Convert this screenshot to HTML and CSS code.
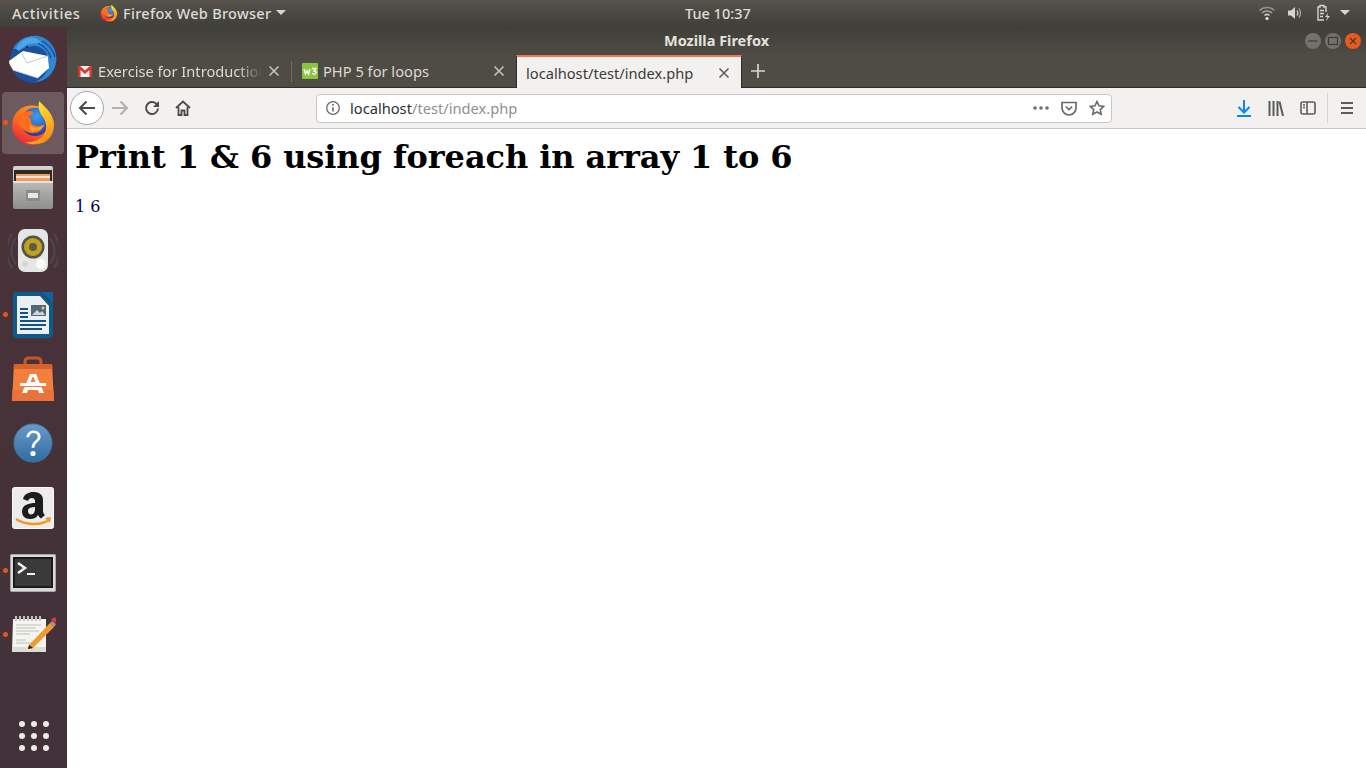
FILE: index.html
```html
<!DOCTYPE html>
<html lang="en">
<head>
  <meta charset="UTF-8">
  <title>Mozilla Firefox</title>
  <link rel="stylesheet" href="styles.css">
</head>
<body>
  <svg class="defs" width="0" height="0">
    <defs>
      <linearGradient id="ffOuter" x1="0.7" y1="0" x2="0.2" y2="1">
        <stop offset="0" stop-color="#ff9a24"/>
        <stop offset="0.5" stop-color="#ff6a1e"/>
        <stop offset="1" stop-color="#e8203c"/>
      </linearGradient>
      <radialGradient id="ffBlue" cx="0.55" cy="0.3" r="0.75">
        <stop offset="0" stop-color="#3aa0f0"/>
        <stop offset="1" stop-color="#2b2f9c"/>
      </radialGradient>
      <linearGradient id="ffYellow" x1="0" y1="0" x2="0.6" y2="1">
        <stop offset="0" stop-color="#fff24e"/>
        <stop offset="0.6" stop-color="#ffc020"/>
        <stop offset="1" stop-color="#ff8a1e"/>
      </linearGradient>
      <symbol id="firefox" viewBox="0 0 44 44">
        <circle cx="21" cy="24" r="19" fill="url(#ffOuter)"/>
        <circle cx="24" cy="21" r="13.500" fill="url(#ffBlue)"/>
        <path d="M28 1c3 4 12 10 14 20 1 10-4 17-10 20-6 2-13 2-18-1 7 1 14-1 18-6 4-6 3-12 0-17-3-4-6-9-4-16z" fill="url(#ffYellow)"/>
        <path d="M8 16c3-4 8-6 14-5 1 2-2 4-5 4.500 2 1 4 3 3 6 3 4 8 4.500 13 1.500-2 7-8 10-15 8-7-2-11-9-10-15z" fill="#ff6d1e"/>
        <path d="M19 24c4 3 9 3 14 0-3 5-9 8-14 5z" fill="#ff9e22"/>
      </symbol>
    </defs>
  </svg>

  <header class="topbar">
    <span class="topbar-item activities">Activities</span>
    <span class="topbar-item app-menu">
      <svg class="app-menu-icon"><use href="#firefox"/></svg>
      Firefox Web Browser
      <i class="caret"></i>
    </span>
    <span class="clock">Tue 10:37</span>
    <span class="tray">
      <svg width="18" height="16" viewBox="0 0 18 16" fill="none" stroke="#c9c7c1" stroke-width="1.500">
        <path d="M1.500 5.500c4-4 11-4 15 0" opacity=".55"/>
        <path d="M4 8c2.700-2.700 7.300-2.700 10 0" opacity=".7"/>
        <path d="M6.500 10.500c1.400-1.300 3.600-1.300 5 0"/>
        <circle cx="9" cy="13.500" r="1.600" fill="#e8e6e0" stroke="none"/>
      </svg>
      <svg width="16" height="16" viewBox="0 0 16 16" fill="none" stroke="#d6d4ce" stroke-width="1.200">
        <path d="M1 5.500h3L8 2v12L4 10.500H1z" fill="#d6d4ce" stroke="none"/>
        <path d="M10 5.500c1 1.500 1 3.500 0 5"/>
        <path d="M12 3.500c2 3 2 6 0 9" opacity=".7"/>
      </svg>
      <svg class="tray-power" width="16" height="18" viewBox="0 0 16 18" fill="none" stroke="#d6d4ce" stroke-width="1.400">
        <path d="M8 16H2V3h2V1.500h4V3h2v5"/>
        <path d="M4 6.500h4M4 9.500h4M4 12.500h3"/>
        <path d="M12 9l-3 4h2.500L10 17l4-5h-2.500z" fill="#d6d4ce" stroke="none"/>
      </svg>
      <i class="caret"></i>
    </span>
  </header>

  <div class="desktop">
    <nav class="dock">
      <div class="dock-item">
        <svg width="50" height="50" viewBox="0 0 50 50">
          <circle cx="25" cy="26" r="23" fill="#1c4f9c"/>
          <path d="M5 15C10 4 23-1 34 3c10 4 16 15 14 26-2 10-10 18-20 19 7-4 13-11 13-20 0-9-7-16-15-16-7 0-13 4-17 3z" fill="#2f86d2"/>
          <path d="M8 15C12 6 20 2 27 4c3 1 6 3 7 7-5-2-12-2-17 1l-6 5z" fill="#4aa8e8"/>
          <path d="M30 9c6 3 11 8 13 15M34 7c6 3 11 9 13 16M38 30c-1 5-4 10-8 13" fill="none" stroke="#164894" stroke-width="1.200"/>
          <path d="M1 27l14-10 25 5 1 12-11 10-25-8c-2-3-4-6-4-9z" fill="#fff"/>
          <path d="M13 18l6 11 21-7" fill="none" stroke="#c4ccd6" stroke-width="1"/>
          <path d="M5 36l25 8" stroke="#cfd6de" stroke-width="1"/>
          <circle cx="19" cy="13" r="1.200" fill="#12305c"/>
        </svg>
      </div>
      <div class="dock-item is-active">
        <i class="dot"></i>
        <svg width="46" height="46"><use href="#firefox"/></svg>
      </div>
      <div class="dock-item">
        <svg width="44" height="46" viewBox="0 0 44 46">
          <defs>
            <linearGradient id="cab" x1="0" y1="0" x2="0" y2="1"><stop offset="0" stop-color="#d4d4d0"/><stop offset="1" stop-color="#8e8e8a"/></linearGradient>
          </defs>
          <path d="M2 4q0-2 2-2h36q2 0 2 2v39q0 2-2 2H4q-2 0-2-2z" fill="url(#cab)"/>
          <rect x="3" y="6" width="38" height="13" fill="#2e2a28"/>
          <rect x="5" y="10" width="34" height="8" fill="#ee9c62"/>
          <rect x="5" y="12" width="34" height="2" fill="#fbe6d2"/>
          <rect x="2" y="17" width="40" height="2" fill="#e4e4e0"/>
          <rect x="15" y="26" width="14" height="11" rx="1" fill="#8b8b87"/>
          <rect x="17" y="29" width="10" height="5" fill="#e8e8e4"/>
        </svg>
      </div>
      <div class="dock-item">
        <svg width="50" height="46" viewBox="0 0 50 46">
          <g fill="none" stroke="#5a7fa8" stroke-width="2" opacity=".25">
            <path d="M8 10c-6 8-6 18 0 26"/><path d="M42 10c6 8 6 18 0 26"/>
            <path d="M4 6c-7 10-7 24 0 34"/><path d="M46 6c7 10 7 24 0 34"/>
          </g>
          <rect x="10" y="1" width="30" height="43" rx="7" fill="#e4e7e3"/>
          <circle cx="25" cy="19" r="11.500" fill="#55524a"/>
          <circle cx="25" cy="19" r="9" fill="#bfa21e"/>
          <circle cx="25" cy="19" r="4" fill="#5f5a4a"/>
          <circle cx="33" cy="36" r="5" fill="#fafafa"/>
          <circle cx="17" cy="36" r="3" fill="#d4d6d2"/>
        </svg>
      </div>
      <div class="dock-item">
        <i class="dot"></i>
        <svg width="42" height="48" viewBox="0 0 42 48">
          <path d="M1 4q0-3 3-3h24l13 13v29q0 4-4 4H5q-4 0-4-4z" fill="#0f5a8c"/>
          <path d="M29 1l12 12V1z" fill="#0f639c"/>
          <path d="M5 5h23l9 10v28H5z" fill="#eceef0"/>
          <path d="M8 17h8v2H8zM8 21h8v2H8zM8 25h8v2H8zM8 29h26v2H8zM8 33h26v2H8zM8 37h22v2H8z" fill="#12527e"/>
          <rect x="19" y="14" width="15" height="11" fill="#54677a"/>
          <path d="M20 24l5-5 3 3 2-2 3 4z" fill="#cfd8e0"/>
          <circle cx="31" cy="17" r="1.500" fill="#f0d040"/>
        </svg>
      </div>
      <div class="dock-item">
        <svg width="44" height="46" viewBox="0 0 44 46">
          <path d="M14 12V6q0-4 4-4h8q4 0 4 4v6" fill="none" stroke="#c4562a" stroke-width="3"/>
          <path d="M3 8h38l2 37H1z" fill="#f27f3e"/>
          <path d="M3 8h38l.5 5H2.500z" fill="#d9622b"/>
          <path d="M1.500 34h41l.5 11H1z" fill="#e9733a"/>
          <path d="M19 18h6l8 19h-5l-1-3H17l-1 3h-5z" fill="#fff"/>
          <path d="M9 27h26v3H9z" fill="#fff"/>
          <path d="M21.500 21h1l2 5h-5z" fill="#f27f3e"/>
          <path d="M9 30h26v1H9z" fill="#f27f3e"/>
        </svg>
      </div>
      <div class="dock-item">
        <svg width="40" height="40" viewBox="0 0 42 42">
          <defs>
            <linearGradient id="helpBlue" x1="0" y1="0" x2="0" y2="1"><stop offset="0" stop-color="#6a9ac6"/><stop offset="1" stop-color="#2e6da4"/></linearGradient>
          </defs>
          <circle cx="21" cy="21" r="20" fill="url(#helpBlue)" stroke="#3f78ab"/>
          <path d="M14 15c.5-4 3.500-7 7.500-7 4.500 0 7.500 3 7.500 6.500 0 5-6 5.500-6.500 11.500h-3c0-6.500 6.500-7.500 6.500-11.500 0-2.500-2-4-4.500-4s-4 1.500-4.500 4.500z" fill="#fff"/>
          <circle cx="21" cy="32" r="2.700" fill="#fff"/>
        </svg>
      </div>
      <div class="dock-item dock-item-low">
        <svg width="42" height="42" viewBox="0 0 42 42">
          <rect x="0.500" y="0.500" width="41" height="41" rx="2" fill="#ececec" stroke="#f8f8f8"/>
          <path d="M11 12c1-5 6-7 10-7 6 0 10 2.500 10 8v11c0 2 1 3 2 4l-4 3.500c-1.500-1-2.500-2.500-3-3.500-2 3-4.500 4-8 4-5 0-8-3-8-7.500 0-6 6-8.500 13-8.500v-2c0-2-1.500-3-3-3-2 0-3.500 1-4 3zm12 8c-4 0-7 1-7 4 0 2 1 3.500 3 3.500 3 0 4-3 4-5.500z" fill="#1d1d1d"/>
          <path d="M4 32c9 6 24 7 33 1" fill="none" stroke="#f29a1e" stroke-width="2.500"/>
          <path d="M33 31l6-1-1 6z" fill="#f29a1e"/>
        </svg>
      </div>
      <div class="dock-item dock-item-lower">
        <i class="dot"></i>
        <svg width="46" height="38" viewBox="0 0 46 38">
          <rect x="0.500" y="0.500" width="45" height="37" rx="1" fill="#d8d8d8" stroke="#a8a8a8"/>
          <rect x="3" y="3" width="40" height="31" fill="#1a1a1a"/>
          <rect x="5" y="5" width="36" height="27" fill="#3a3a3a"/>
          <path d="M8 9l7 5-7 5" fill="none" stroke="#f2f2f2" stroke-width="2.500"/>
          <rect x="17" y="19" width="8" height="2" fill="#f2f2f2"/>
        </svg>
      </div>
      <div class="dock-item">
        <i class="dot"></i>
        <svg width="46" height="38" viewBox="0 0 46 38">
          <path d="M3 3h33v33H2z" fill="#f4f4f0"/>
          <path d="M3 31h33v5H2z" fill="#dcdcd4"/>
          <g stroke="#c4c4bc" stroke-width="2">
            <path d="M6 0v5M10 0v5M14 0v5M18 0v5M22 0v5M26 0v5M30 0v5"/>
          </g>
          <g stroke="#c0c0b8" stroke-width="1">
            <path d="M6 9h25M6 12h20M6 15h23M6 18h14M6 24h10M6 27h18"/>
          </g>
          <path d="M19 29l21-22 4 4-21 21-5 1z" fill="#f09a30"/>
          <path d="M19 29l4 3-5 1z" fill="#222"/>
          <path d="M40 7l2-2 4 3-2 3z" fill="#9a9a9a"/>
          <circle cx="44" cy="4" r="2.500" fill="#d83a3a"/>
        </svg>
      </div>
      <div class="dock-apps">
        <i></i><i></i><i></i><i></i><i></i><i></i><i></i><i></i><i></i>
      </div>
    </nav>

    <div class="window">
      <div class="titlebar">
        <span class="title">Mozilla Firefox</span>
        <span class="window-buttons">
          <span class="win-btn"><svg width="16" height="16" viewBox="0 0 16 16"><path d="M3.500 8h9" stroke="#3c3b37" stroke-width="1.200"/></svg></span>
          <span class="win-btn"><svg width="16" height="16" viewBox="0 0 16 16"><rect x="3.500" y="4.500" width="9" height="7" fill="none" stroke="#3c3b37" stroke-width="1.200"/></svg></span>
          <span class="win-btn win-close"><svg width="16" height="16" viewBox="0 0 16 16"><path d="M5 5l6 6M11 5l-6 6" stroke="#3c3b37" stroke-width="1.200"/></svg></span>
        </span>
      </div>

      <div class="tabstrip">
        <div class="tab">
          <svg class="favicon" width="16" height="16" viewBox="0 0 16 16">
            <rect x="1" y="3" width="14" height="11" fill="#eeeeee"/>
            <path d="M1 3h2l5 4.500L13 3h2v11h-2.500V7L8 11 3.500 7v7H1z" fill="#d8382c"/>
          </svg>
          <span class="tab-label tab-label-fade">Exercise for Introduction</span>
          <svg class="tab-close" width="12" height="12" viewBox="0 0 12 12"><path d="M1.500 1.500l9 9M10.500 1.500l-9 9" stroke="#c7c5bf" stroke-width="1.500"/></svg>
        </div>
        <i class="tab-sep"></i>
        <div class="tab">
          <svg class="favicon" width="16" height="16" viewBox="0 0 16 16">
            <rect width="16" height="16" rx="1" fill="#8ac53e"/>
            <path d="M2 6l1.500 5L5 7.500 6.500 11 8 6" fill="none" stroke="#fff" stroke-width="1.300"/>
            <path d="M10 5.500h4l-2 2.500c2 0 2.500 1 2 2-.5 1.200-3 1.500-4 .2" fill="none" stroke="#fff" stroke-width="1.300"/>
          </svg>
          <span class="tab-label">PHP 5 for loops</span>
          <svg class="tab-close" width="12" height="12" viewBox="0 0 12 12"><path d="M1.500 1.500l9 9M10.500 1.500l-9 9" stroke="#c7c5bf" stroke-width="1.500"/></svg>
        </div>
        <div class="tab tab-active">
          <span class="tab-label">localhost/test/index.php</span>
          <svg class="tab-close" width="12" height="12" viewBox="0 0 12 12"><path d="M1.500 1.500l9 9M10.500 1.500l-9 9" stroke="#5a5a5a" stroke-width="1.500"/></svg>
        </div>
        <svg class="new-tab" width="14" height="14" viewBox="0 0 14 14"><path d="M7 0v14M0 7h14" stroke="#d6d4ce" stroke-width="1.700"/></svg>
      </div>

      <div class="navbar">
        <span class="back-btn">
          <svg width="18" height="16" viewBox="0 0 18 16" fill="none" stroke="#4a4a4a" stroke-width="2"><path d="M17 8H2M8.500 1.500L2 8l6.500 6.500"/></svg>
        </span>
        <svg class="forward" width="18" height="16" viewBox="0 0 18 16" fill="none" stroke="#b1b1b0" stroke-width="2"><path d="M1 8h15M9.500 1.500L16 8l-6.500 6.500"/></svg>
        <svg class="reload" width="16" height="16" viewBox="0 0 16 16" fill="none" stroke="#4a4a4a" stroke-width="2"><path d="M14 8.500a6 6 0 1 1-1.800-4.800L14 5.500"/><path d="M15 1v6H9z" fill="#4a4a4a" stroke="none"/></svg>
        <svg class="home" width="16" height="16" viewBox="0 0 16 16" fill="none" stroke="#4a4a4a" stroke-width="1.800"><path d="M1 8l7-6.500L15 8"/><path d="M3.500 7v8h3v-4.500h3V15h3V7"/></svg>

        <div class="urlbar">
          <svg class="info" width="16" height="16" viewBox="0 0 16 16" fill="none" stroke="#6a6a6a" stroke-width="1.300"><circle cx="8" cy="8" r="6.300"/><path d="M8 7.200v4.300" stroke-width="1.600"/><circle cx="8" cy="4.800" r="1" fill="#6a6a6a" stroke="none"/></svg>
          <span class="url"><span class="url-host">localhost</span>/test/index.php</span>
          <span class="url-actions">
            <svg width="16" height="4" viewBox="0 0 16 4" fill="#6f6f6f"><circle cx="2" cy="2" r="1.800"/><circle cx="8" cy="2" r="1.800"/><circle cx="14" cy="2" r="1.800"/></svg>
            <svg width="16" height="15" viewBox="0 0 16 15" fill="none" stroke="#6a6a6a" stroke-width="1.700"><path d="M1 1.500h14v5.500a7 7 0 0 1-14 0z"/><path d="M4.800 5.500L8 8.500l3.200-3"/></svg>
            <svg width="16" height="16" viewBox="0 0 16 16" fill="none" stroke="#6a6a6a" stroke-width="1.600"><path d="M8 1.500l2 4.300 4.700.6-3.400 3.200.9 4.700L8 12l-4.200 2.300.9-4.700L1.300 6.400 6 5.800z"/></svg>
          </span>
        </div>

        <div class="toolbar-right">
          <svg width="16" height="17" viewBox="0 0 16 17" fill="none" stroke="#0a84ff" stroke-width="2"><path d="M8 0v12M2.500 7L8 12.500 13.500 7M1 16h14"/></svg>
          <svg width="16" height="15" viewBox="0 0 16 15" fill="none" stroke="#5c5c5c" stroke-width="2"><path d="M1.500 0v15M5.500 0v15M9.500 0v15M11.500.5L15 15"/></svg>
          <svg width="16" height="14" viewBox="0 0 16 14" fill="none" stroke="#5c5c5c" stroke-width="1.600"><rect x="1" y="1" width="14" height="12" rx="2"/><path d="M7 1v12M3 4h2M3 6.500h2"/></svg>
          <i class="toolbar-sep"></i>
          <svg width="14" height="12" viewBox="0 0 14 12" stroke="#5c5c5c" stroke-width="2"><path d="M1 1h12M1 6h12M1 11h12"/></svg>
        </div>
      </div>

      <main class="content">
        <h1>Print 1 &amp; 6 using foreach in array 1 to 6</h1>
        <p class="result">1 6</p>
      </main>
    </div>
  </div>
</body>
</html>
```

FILE: styles.css
```css
html, body {
  height: 100%;
}

body {
  margin: 0;
  display: flex;
  flex-direction: column;
  overflow: hidden;
  font-family: "Noto Sans", sans-serif;
  background: #fff;
}

.defs {
  position: absolute;
  width: 0;
  height: 0;
}

/* top panel */
.topbar {
  height: 27px;
  box-sizing: border-box;
  padding: 0 0 2px 12px;
  flex: none;
  display: flex;
  align-items: center;
  position: relative;
  background: linear-gradient(#55534c, #3f3e39);
  color: #dedcd6;
  font-size: 14.5px;
  font-weight: 500;
  letter-spacing: 0.3px;
}

.activities {
  width: 88px;
  letter-spacing: 0.6px;
}

.app-menu {
  display: flex;
  align-items: center;
  gap: 5px;
}

.app-menu-icon {
  width: 18px;
  height: 18px;
}

.caret {
  display: inline-block;
  width: 0;
  height: 0;
  border-left: 5px solid transparent;
  border-right: 5px solid transparent;
  border-top: 5px solid #d6d4ce;
}

.clock {
  position: absolute;
  left: 685px;
  letter-spacing: 0;
}

.tray {
  margin-left: auto;
  padding-right: 16px;
  display: flex;
  align-items: center;
  gap: 11px;
}

.tray-power {
  margin: 0 -3px 0 2px;
}

/* dock and window */
.desktop {
  flex: 1;
  display: flex;
  min-height: 0;
}

.dock {
  width: 67px;
  flex: none;
  display: flex;
  flex-direction: column;
  background: linear-gradient(#4c3238, #41323a);
}

.dock-item {
  height: 64px;
  box-sizing: border-box;
  padding-right: 1px;
  flex: none;
  display: flex;
  align-items: center;
  justify-content: center;
  position: relative;
}

.dock-item-low {
  padding-top: 2px;
}

.dock-item-lower {
  padding-top: 3px;
}

.dock-item.is-active::before {
  content: "";
  position: absolute;
  left: 2px;
  right: 3px;
  top: 1px;
  bottom: 1px;
  border-radius: 4px;
  background: #6c5a5e;
}

.dock-item svg {
  position: relative;
}

.dot {
  position: absolute;
  left: 3px;
  top: 50%;
  width: 5px;
  height: 5px;
  margin-top: -3px;
  border-radius: 50%;
  background: #e9541f;
  z-index: 1;
}

.dock-apps {
  margin-top: auto;
  margin-bottom: 17px;
  align-self: center;
  display: grid;
  grid-template-columns: repeat(3, 6px);
  gap: 6px;
}

.dock-apps i {
  width: 6px;
  height: 6px;
  border-radius: 50%;
  background: #eeeae8;
}

.window {
  flex: 1;
  min-width: 0;
  display: flex;
  flex-direction: column;
}

.titlebar {
  height: 28px;
  flex: none;
  display: flex;
  align-items: center;
  justify-content: center;
  position: relative;
  background: linear-gradient(#3f3e39, #4f4c45);
  color: #e4e2dc;
  font-size: 14.5px;
  font-weight: 700;
}

.title {
  margin: -2px 0 0 0;
}

.window-buttons {
  position: absolute;
  right: 5px;
  top: 6px;
  display: flex;
  gap: 4px;
}

.win-btn {
  width: 16px;
  height: 16px;
  border-radius: 50%;
  background: #73716b;
  display: block;
}

.win-btn svg {
  display: block;
}

.win-close {
  background: #e9591f;
}

/* tabs */
.tabstrip {
  height: 33px;
  flex: none;
  display: flex;
  align-items: stretch;
  background: #4f4c45;
  color: #dcdad4;
  font-size: 14.67px;
  border-bottom: 1px solid #2e2d2a;
  box-sizing: border-box;
}

.tab {
  width: 224px;
  display: flex;
  align-items: center;
  padding: 0 11px 0 10px;
  box-sizing: border-box;
}

.tab + .tab {
  width: 225px;
}

.favicon {
  flex: none;
  margin-right: 5px;
}

.tab-label {
  flex: 1;
  overflow: hidden;
  white-space: nowrap;
}

.tab-label-fade {
  -webkit-mask-image: linear-gradient(to left, transparent 0, #000 24px);
  mask-image: linear-gradient(to left, transparent 0, #000 24px);
}

.tab-close {
  flex: none;
  margin-left: 6px;
}

.tab-sep {
  width: 1px;
  margin: 6px 0 5px;
  background: #716e67;
}

.tab + .tab.tab-active {
  width: 226px;
  height: 33px;
  padding-left: 9px;
  background: #f2f1ef;
  color: #3c3b37;
  border-top: 2px solid #f0764a;
  border-left: 1px solid #2e2d2a;
  border-right: 1px solid #2e2d2a;
}

.new-tab {
  align-self: center;
  margin-left: 9px;
}

/* navigation bar */
.navbar {
  height: 41px;
  flex: none;
  display: flex;
  align-items: center;
  box-sizing: border-box;
  padding-left: 3px;
  background: #f2f1ef;
  border-bottom: 1px solid #c8c6c3;
}

.back-btn {
  width: 34px;
  height: 34px;
  box-sizing: border-box;
  display: flex;
  align-items: center;
  justify-content: center;
  border-radius: 50%;
  border: 1px solid #a9a8a6;
  background: #fff;
}

.forward {
  margin-left: 7px;
}

.reload {
  margin-left: 15px;
}

.home {
  margin-left: 15px;
}

.urlbar {
  width: 796px;
  height: 29px;
  margin-left: 125px;
  box-sizing: border-box;
  display: flex;
  align-items: center;
  padding: 0 5px 0 8px;
  background: #fff;
  border: 1px solid #c8c6c3;
  border-radius: 4px;
  font-size: 14.67px;
  color: #8f8f8f;
}

.info {
  flex: none;
}

.url {
  margin-left: 9px;
}

.url-host {
  color: #2f2f2f;
}

.url-actions {
  margin-left: auto;
  display: flex;
  align-items: center;
  gap: 12px;
  padding-right: 1px;
}

.toolbar-right {
  display: flex;
  align-items: center;
  margin-left: 124px;
  gap: 16px;
}

.toolbar-sep {
  width: 1px;
  height: 30px;
  margin: 0 -4px 0 -5px;
  background: #d8d6d4;
}

/* page */
.content {
  flex: 1;
  padding: 9px 8px 8px;
  background: #fff;
  font-family: "DejaVu Serif", serif;
  color: #000;
}

h1 {
  margin: 0;
  font-size: 32px;
  line-height: 38px;
  letter-spacing: -0.08px;
  color: #000;
}

.result {
  margin: 21px 0 0;
  font-size: 16px;
  line-height: 19px;
  color: #00004d;
}
```
